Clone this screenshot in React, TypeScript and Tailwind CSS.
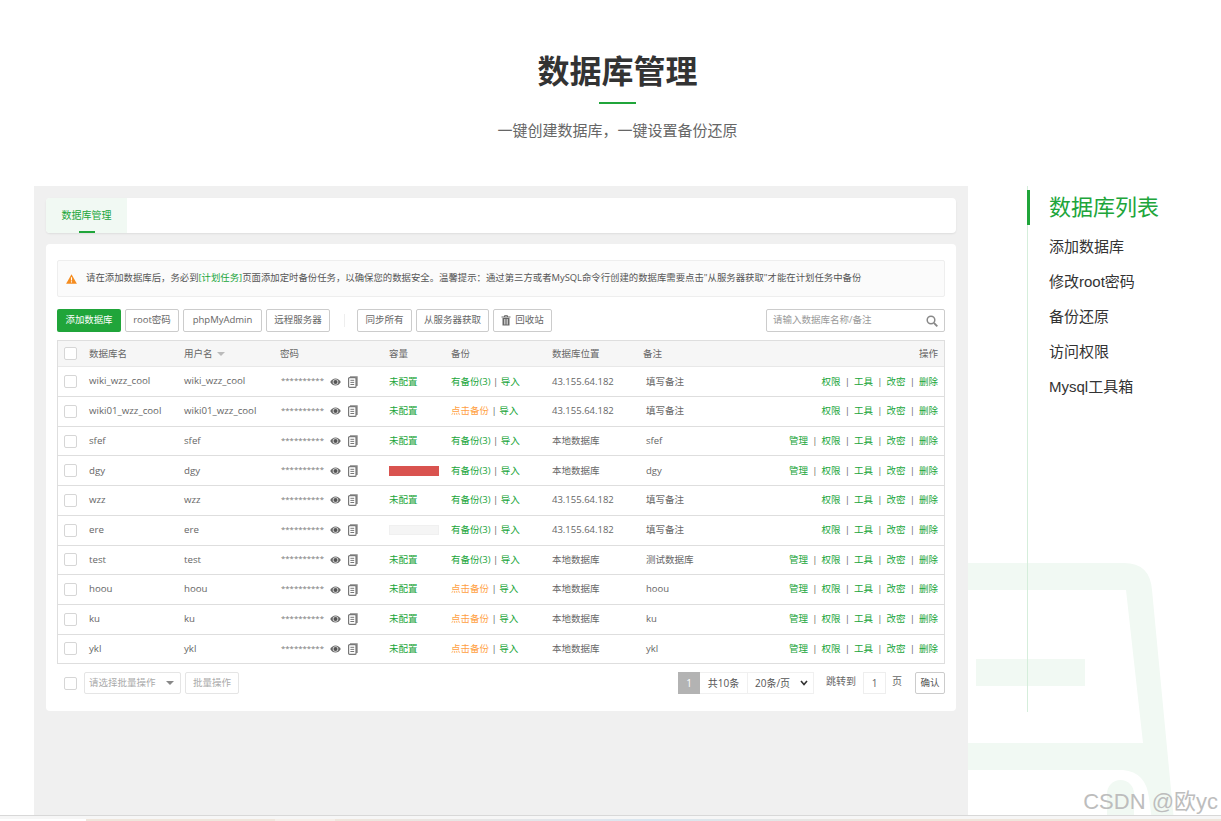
import React from "react";

const CJK = "font-['Liberation_Sans','Noto_Sans_CJK_SC',sans-serif]";
const PANEL = "font-['Open_Sans','Noto_Sans_CJK_SC',sans-serif]";

type Row = { name: string; user: string; cap: "none" | "red" | "empty"; backup: boolean; loc: string; note: string; manage: boolean };

const rows: Row[] = [
  { name: "wiki_wzz_cool", user: "wiki_wzz_cool", cap: "none", backup: true, loc: "43.155.64.182", note: "填写备注", manage: false },
  { name: "wiki01_wzz_cool", user: "wiki01_wzz_cool", cap: "none", backup: false, loc: "43.155.64.182", note: "填写备注", manage: false },
  { name: "sfef", user: "sfef", cap: "none", backup: true, loc: "本地数据库", note: "sfef", manage: true },
  { name: "dgy", user: "dgy", cap: "red", backup: true, loc: "本地数据库", note: "dgy", manage: true },
  { name: "wzz", user: "wzz", cap: "none", backup: true, loc: "43.155.64.182", note: "填写备注", manage: false },
  { name: "ere", user: "ere", cap: "empty", backup: true, loc: "43.155.64.182", note: "填写备注", manage: false },
  { name: "test", user: "test", cap: "none", backup: true, loc: "本地数据库", note: "测试数据库", manage: true },
  { name: "hoou", user: "hoou", cap: "none", backup: false, loc: "本地数据库", note: "hoou", manage: true },
  { name: "ku", user: "ku", cap: "none", backup: false, loc: "本地数据库", note: "ku", manage: true },
  { name: "ykl", user: "ykl", cap: "none", backup: false, loc: "本地数据库", note: "ykl", manage: true },
];

const Eye = () => (
  <svg width="11" height="8" viewBox="0 0 11 8" className="block">
    <path d="M0.2 4C1.5 1.6 3.4 0.4 5.5 0.4S9.5 1.6 10.8 4C9.5 6.4 7.6 7.6 5.5 7.6S1.5 6.4 0.2 4Z" fill="#666" />
    <circle cx="5.5" cy="4" r="2.8" fill="#ddd" />
    <circle cx="5.5" cy="4" r="2" fill="#555" />
  </svg>
);
const Copy = () => (
  <svg width="10" height="12" viewBox="0 0 10 12" className="block">
    <path d="M2 0.3H9.7V10H8V2H2Z" fill="#888" />
    <rect x="0.6" y="1.6" width="7.4" height="9.8" rx="1" fill="#fff" stroke="#777" strokeWidth="1.2" />
    <path d="M2.4 4.3H6.2M2.4 6.4H6.2M2.4 8.5H6.2" stroke="#777" />
  </svg>
);
const Check = () => <span className="block w-[13px] h-[13px] rounded-[2px] border border-[#d6d6d6] bg-white" />;
const Btn = ({ children, w }: { children: React.ReactNode; w: string }) => (
  <span className={`h-[23px] ${w} border border-[#ccc] rounded-[2px] flex items-center justify-center text-[9.5px] text-[#666] bg-white whitespace-nowrap`}>{children}</span>
);

const Ops = ({ manage }: { manage: boolean }) => {
  const items = manage ? ["管理", "权限", "工具", "改密", "删除"] : ["权限", "工具", "改密", "删除"];
  return (
    <div className="flex-1 flex justify-end items-center pr-[6px] text-[9.5px] text-[#20a53a]">
      {items.map((t, i) => (
        <React.Fragment key={t}>
          {i > 0 && <span className="w-[13.5px] text-center text-[#666]">|</span>}
          <span className="w-[19px] whitespace-nowrap">{t}</span>
        </React.Fragment>
      ))}
    </div>
  );
};

function TableRow({ r }: { r: Row }) {
  return (
    <div className="flex items-center h-[29.7px] border-b border-[#dedede] text-[9.5px] text-[#666]">
      <div className="w-[31px] pl-[6px] shrink-0"><Check /></div>
      <div className="w-[95px] shrink-0 whitespace-nowrap text-[9.7px]">{r.name}</div>
      <div className="w-[97px] shrink-0 whitespace-nowrap text-[9.7px]">{r.user}</div>
      <div className="w-[108px] shrink-0 flex items-center">
        <span className="w-[49px] text-[7.8px] leading-none text-[#777] -mt-[1px] whitespace-nowrap">**********</span>
        <Eye />
        <span className="w-[7px]" />
        <Copy />
      </div>
      <div className="w-[62px] shrink-0 text-[#20a53a]">
        {r.cap === "none" && "未配置"}
        {r.cap === "red" && <div className="w-[50px] h-[10px] bg-[#d9534f]" />}
        {r.cap === "empty" && <div className="w-[50px] h-[10px] bg-[#f5f5f5] border border-[#f0f0f0]" />}
      </div>
      <div className="w-[101px] shrink-0 whitespace-nowrap">
        {r.backup ? <span className="text-[#20a53a]">有备份(3)</span> : <span className="text-[#ff9f3f]">点击备份</span>}
        <span className="text-[#666]"> | </span>
        <span className="text-[#20a53a]">导入</span>
      </div>
      <div className="w-[94px] shrink-0 whitespace-nowrap">{r.loc}</div>
      <div className="w-[100px] shrink-0 whitespace-nowrap">{r.note}</div>
      <Ops manage={r.manage} />
    </div>
  );
}

export default function App() {
  return (
    <div className={`${CJK} relative w-[1221px] h-[821px] overflow-hidden bg-white`}>
      {/* page header */}
      <div className="h-[186px] pt-[51px] flex flex-col items-center w-[1235px]">
        <h1 className="text-[32px] leading-[42px] font-bold text-[#333]">数据库管理</h1>
        <div className="w-[37px] h-[2px] bg-[#20a53a] mt-[9px]" />
        <p className="text-[15px] leading-[20px] text-[#666] mt-[17px]">一键创建数据库，一键设置备份还原</p>
      </div>

      <div className="flex items-start">
        {/* main panel */}
        <div className={`${PANEL} ml-[34px] w-[934px] h-[635px] bg-[#f0f0f0] pt-[12px] px-[12px] shrink-0 relative z-10`}>
          <div className="h-[35px] bg-white rounded-[4px] shadow-[0_1px_2px_rgba(0,0,0,0.08)] flex">
            <div className="relative w-[81px] bg-[#f1f9f3] rounded-l-[4px] flex items-center justify-center text-[10px] text-[#20a53a] pb-[1px]">
              数据库管理
              <span className="absolute bottom-0 left-[33px] w-[16px] h-[2px] bg-[#20a53a]" />
            </div>
          </div>
          <div className="mt-[11px] h-[467px] bg-white rounded-[4px] px-[11px] pt-[16px]">
            {/* notice */}
            <div className="h-[37px] border border-[#eee] bg-[#fbfbfb] rounded-[2px] flex items-center pl-[8px] text-[9.4px] text-[#555]">
              <svg width="11" height="10" viewBox="0 0 11 10" className="mr-[9px] shrink-0">
                <path d="M5.5 0.3L10.9 9.7H0.1Z" fill="#f58c1f" />
                <path d="M5.5 3.2V6.4M5.5 7.2V8.4" stroke="#fff" strokeWidth="1.1" />
              </svg>
              <span className="whitespace-nowrap">请在添加数据库后，务必到<span className="text-[#20a53a]">[计划任务]</span>页面添加定时备份任务，以确保您的数据安全。温馨提示：通过第三方或者MySQL命令行创建的数据库需要点击"从服务器获取"才能在计划任务中备份</span>
            </div>
            {/* toolbar */}
            <div className="mt-[12px] flex items-center">
              <span className="h-[23px] w-[64px] bg-[#20a53a] rounded-[2px] text-white text-[9.4px] flex items-center justify-center">添加数据库</span>
              <div className="w-[4px]" />
              <Btn w="w-[54px]">root密码</Btn>
              <div className="w-[4px]" />
              <Btn w="w-[79px]">phpMyAdmin</Btn>
              <div className="w-[4px]" />
              <Btn w="w-[64px]">远程服务器</Btn>
              <div className="w-[14px]" />
              <span className="w-px h-[13px] bg-[#eee]" />
              <div className="w-[12px]" />
              <Btn w="w-[55px]">同步所有</Btn>
              <div className="w-[4px]" />
              <Btn w="w-[73px]">从服务器获取</Btn>
              <div className="w-[4px]" />
              <Btn w="w-[59px]">
                <svg width="10" height="11" viewBox="0 0 10 11" className="mr-[4px]">
                  <path d="M0.5 2H9.5M3.5 2V0.7H6.5V2" stroke="#666" fill="none" />
                  <path d="M1.5 3H8.5V10.5H1.5Z" fill="#666" />
                  <path d="M3.5 4V9.5M5 4V9.5M6.5 4V9.5" stroke="#fff" strokeWidth="0.6" />
                </svg>
                回收站
              </Btn>
              <div className="flex-1" />
              <div className="h-[23px] w-[179px] border border-[#ccc] rounded-[2px] flex items-center px-[6px] text-[9.5px] text-[#999]">
                <span className="flex-1">请输入数据库名称/备注</span>
                <svg width="12" height="12" viewBox="0 0 12 12">
                  <circle cx="5" cy="5" r="3.8" stroke="#888" strokeWidth="1.5" fill="none" />
                  <path d="M8 8L11.3 11.3" stroke="#888" strokeWidth="1.8" />
                </svg>
              </div>
            </div>
            {/* table */}
            <div className="mt-[8px] border-x border-t border-[#dedede]">
              <div className="h-[26.4px] flex items-center bg-[#f6f6f6] border-b border-[#e8e8e8] text-[9.5px] text-[#666]">
                <div className="w-[31px] pl-[6px] shrink-0"><Check /></div>
                <div className="w-[95px] shrink-0">数据库名</div>
                <div className="w-[96px] shrink-0 flex items-center">用户名<span className="ml-[4px] mt-[1px] border-x-[4px] border-x-transparent border-t-[4px] border-t-[#bbb]" /></div>
                <div className="w-[109px] shrink-0">密码</div>
                <div className="w-[62px] shrink-0">容量</div>
                <div className="w-[101px] shrink-0">备份</div>
                <div className="w-[91px] shrink-0">数据库位置</div>
                <div className="w-[40px] shrink-0">备注</div>
                <div className="flex-1 text-right pr-[6px]">操作</div>
              </div>
              {rows.map((r) => <TableRow key={r.name} r={r} />)}
            </div>
            {/* footer */}
            <div className="mt-[8px] h-[22px] flex items-center">
              <div className="pl-[7px] w-[27px] shrink-0"><Check /></div>
              <div className="w-[97px] h-[22px] border border-[#e5e5e5] rounded-[2px] flex items-center pl-[4px] text-[9.5px] text-[#aaa] shrink-0">
                <span className="flex-1">请选择批量操作</span>
                <span className="mr-[6px] border-x-[4px] border-x-transparent border-t-[4px] border-t-[#888]" />
              </div>
              <div className="w-[4px]" />
              <span className="h-[22px] w-[54px] border border-[#e5e5e5] rounded-[2px] flex items-center justify-center text-[9.5px] text-[#aaa]">批量操作</span>
              <div className="flex-1" />
              <span className="h-[22px] w-[22px] bg-[#b3b3b3] text-white text-[10px] flex items-center justify-center">1</span>
              <span className="h-[22px] w-[48px] border-y border-r border-[#f0f0f0] text-[#555] text-[10px] flex items-center justify-center">共10条</span>
              <span className="h-[22px] w-[66px] border-y border-r border-[#f0f0f0] text-[#555] text-[10px] flex items-center pl-[7px]">
                <span className="flex-1">20条/页</span>
                <svg width="8" height="6" viewBox="0 0 8 6" className="mr-[5px]"><path d="M1 1L4 4.5L7 1" stroke="#333" strokeWidth="1.6" fill="none" /></svg>
              </span>
              <span className="ml-[12px] w-[31px] text-[10px] text-[#666] mb-[3px] whitespace-nowrap">跳转到</span>
              <span className="ml-[6px] h-[22px] w-[23px] border border-[#eee] text-[10px] text-[#666] flex items-center justify-center">1</span>
              <span className="ml-[6px] w-[23px] text-[10px] text-[#666] mb-[3px]">页</span>
              <span className="h-[22px] w-[30px] border border-[#ccc] rounded-[2px] text-[9.5px] text-[#555] flex items-center justify-center">确认</span>
            </div>
          </div>
        </div>

        {/* side nav */}
        <div className="ml-[59px] w-[190px] relative z-10 h-[526px] border-l border-[#d5eedb]">
          <div className="mt-[4px] border-l-[3px] border-[#20a53a] -ml-px pl-[19px] h-[35px] flex items-center text-[22px] text-[#20a53a] whitespace-nowrap">数据库列表</div>
          <div className="mt-[5px] pl-[21px] text-[15px] text-[#333]">
            {["添加数据库", "修改root密码", "备份还原", "访问权限", "Mysql工具箱"].map((t) => (
              <div key={t} className="h-[35px] flex items-center whitespace-nowrap">{t}</div>
            ))}
          </div>
        </div>
      </div>

      {/* faded background illustration */}
      <svg className="absolute left-[968px] top-[540px]" width="253" height="281" viewBox="0 0 253 281">
        <path d="M0 23H156Q182 23 184 50L206 281H184L181 258Q178 232 155 230H0V203H175L158 50H0Z" fill="#f1f9f3" />
        <rect x="8" y="119" width="109" height="27" fill="#f1f9f3" />
        <path d="M139 281V253.5a13.5 13.5 0 0 1 27 0V281Z" fill="#f1f9f3" />
      </svg>

      {/* watermark */}
      <span className="absolute right-[3px] top-[788px] z-20 text-[22px] leading-[28px] text-[#bdbdbd] whitespace-nowrap">CSDN @欧yc</span>

      {/* bottom sliver */}
      <div className="absolute left-0 right-0 bottom-0 h-[6px] z-30 bg-[#f6f6f6] border-t border-[#d8d8d8] flex flex-col">
        <div className="h-[3px]" />
        <div className="h-[2px] bg-[linear-gradient(90deg,#ffffff_0,#ffffff_86px,#efe6dc_86px,#efe6dc_275px,#f5efe9_275px,#f5efe9_335px,#efe6dc_335px,#dfe6ee_600px,#d8e6f0_650px,#efe6dc_900px,#efe6dc_100%)]" />
      </div>
    </div>
  );
}
